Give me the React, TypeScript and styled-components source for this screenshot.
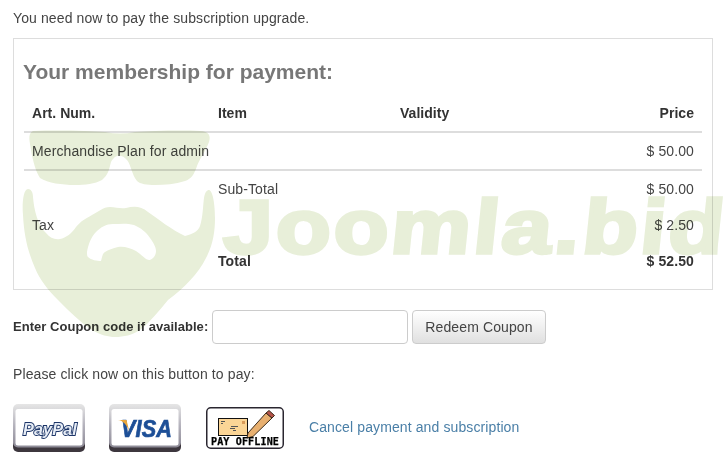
import React from "react";
import styled, { createGlobalStyle } from "styled-components";

const Global = createGlobalStyle`
  html, body { margin: 0; padding: 0; background: #fff; }
  body { font-family: "Liberation Sans", Arial, sans-serif; font-size: 14px; line-height: 20px; color: #444; letter-spacing: 0.11px; }
`;

const Page = styled.div`
  position: relative;
  width: 725px;
  height: 464px;
  padding: 8px 12px 0 13px;
  box-sizing: border-box;
  overflow: hidden;
`;

const Para = styled.p<{ $top?: number }>`
  margin: ${(p) => p.$top ?? 0}px 0 0;
`;

const Box = styled.section`
  margin-top: 10px;
  border: 1px solid #ddd;
  padding: 0 10px 10px;
`;

const Heading = styled.h3`
  margin: 18px 0 8px -1px;
  font-size: 21px;
  line-height: 30px;
  font-weight: bold;
  color: #777;
  letter-spacing: 0;
`;

const Table = styled.table`
  width: 678px;
  border-collapse: separate;
  border-spacing: 0;
  table-layout: fixed;
`;

const HeadCell = styled.th<{ $w?: number; $right?: boolean }>`
  width: ${(p) => (p.$w ? `${p.$w}px` : "auto")};
  height: 36px;
  padding: 8px;
  box-sizing: border-box;
  text-align: ${(p) => (p.$right ? "right" : "left")};
  font-weight: bold;
  color: #333;
  letter-spacing: 0.03px;
  border-bottom: 2px solid #ddd;
`;

const Cell = styled.td<{ $right?: boolean; $bold?: boolean; $line?: boolean }>`
  height: ${(p) => (p.$line ? 38 : 36)}px;
  padding: 8px;
  box-sizing: border-box;
  text-align: ${(p) => (p.$right ? "right" : "left")};
  font-weight: ${(p) => (p.$bold ? "bold" : "normal")};
  color: ${(p) => (p.$bold ? "#333" : "#444")};
  border-bottom: ${(p) => (p.$line ? "2px solid #ddd" : "none")};
  white-space: nowrap;
`;

const CouponRow = styled.form`
  display: flex;
  align-items: center;
  margin-top: 20px;
  height: 34px;
`;

const CouponLabel = styled.label`
  font-size: 13px;
  font-weight: bold;
  color: #333;
  letter-spacing: 0.03px;
  width: 199px;
  white-space: nowrap;
`;

const CouponInput = styled.input`
  width: 196px;
  height: 34px;
  box-sizing: border-box;
  border: 1px solid #ccc;
  border-radius: 4px;
  background: #fff;
`;

const RedeemButton = styled.button`
  margin-left: 4px;
  width: 134px;
  height: 34px;
  box-sizing: border-box;
  border: 1px solid #ccc;
  border-radius: 4px;
  background: linear-gradient(#fff, #e0e0e0);
  color: #444;
  font: 14px/20px "Liberation Sans", Arial, sans-serif;
  letter-spacing: 0.11px;
  padding: 0;
`;

const PayRow = styled.div`
  display: flex;
  align-items: center;
  margin-top: 20px;
  height: 48px;
`;

const PayIcon = styled.svg<{ $gap: number }>`
  display: block;
  flex: none;
  margin-right: ${(p) => p.$gap}px;
`;

const CancelLink = styled.a`
  margin-bottom: 2px;
  color: #4a7fa7;
  text-decoration: none;
`;

const Watermark = styled.div`
  position: absolute;
  left: 0;
  top: 0;
  width: 725px;
  height: 464px;
  pointer-events: none;
  mix-blend-mode: multiply;
`;

const Beard = styled.svg`
  position: absolute;
  left: 0;
  top: 0;
`;

const Brand = styled.div`
  position: absolute;
  left: 223px;
  top: 180px;
  white-space: nowrap;
  font-family: "Liberation Sans", sans-serif;
  font-weight: bold;
  font-size: 76px;
  line-height: 94px;
  letter-spacing: 2.6px;
  color: #e8efd9;
  -webkit-text-stroke: 3.5px #e8efd9;
  transform-origin: left top;
  transform: scaleX(1.18);
`;

const Slanted = styled.span`
  display: inline-block;
  transform: skewX(-5deg);
`;

function CardFrame() {
  return (
    <>
      <defs>
        <linearGradient id="cardEdge" x1="0" y1="0" x2="0" y2="1">
          <stop offset="0" stopColor="#e6e6e6" />
          <stop offset="0.5" stopColor="#b4b2bc" />
          <stop offset="1" stopColor="#8d8a96" />
        </linearGradient>
      </defs>
      <rect x="0" y="6" width="72" height="42" rx="5" fill="#3d373e" />
      <rect x="0" y="0" width="72" height="43.5" rx="5" fill="url(#cardEdge)" />
      <rect x="2.5" y="5" width="67" height="36.5" rx="2.5" fill="#fff" />
    </>
  );
}

function PayPalCard() {
  return (
    <PayIcon $gap={24} width="72" height="48" viewBox="0 0 72 48">
      <CardFrame />
      <text
        x="10"
        y="31"
        fontFamily="'Liberation Sans', sans-serif"
        fontWeight="bold"
        fontStyle="italic"
        fontSize="16"
        fill="#e6ecf5"
        stroke="#1c3568"
        strokeWidth="1.8"
        paintOrder="stroke"
        textLength="54"
        lengthAdjust="spacingAndGlyphs"
      >
        PayPal
      </text>
    </PayIcon>
  );
}

function VisaCard() {
  return (
    <PayIcon $gap={25} width="72" height="48" viewBox="0 0 72 48">
      <CardFrame />
      <text
        x="12"
        y="33"
        fontFamily="'Liberation Sans', sans-serif"
        fontWeight="bold"
        fontStyle="italic"
        fontSize="23"
        fill="#1d4f97"
        stroke="#1d4f97"
        strokeWidth="0.7"
        textLength="51"
        lengthAdjust="spacingAndGlyphs"
      >
        VISA
      </text>
      <path d="M9 16 C14 16.5 18 21 20.5 28 L17.5 16 Z" fill="#e9a53a" />
    </PayIcon>
  );
}

function OfflineCard() {
  return (
    <PayIcon $gap={25} width="78" height="42" viewBox="0 0 78 42">
      <rect x="0.75" y="0.75" width="76.5" height="40.5" rx="4" fill="#fff" stroke="#2a2630" strokeWidth="1.5" />
      <rect x="12.5" y="11.5" width="29" height="17" fill="#fbd596" stroke="#111" strokeWidth="1" />
      <path d="M15 14.5h4M15 16.5h2M25 19.5h7M24 21.5h5M27 23.5h3" stroke="#555" strokeWidth="1" fill="none" />
      <rect x="36" y="14" width="3" height="3" fill="#d99a58" />
      <path d="M42 26 L41 31 L47 29.5 L66 11 L60 6 Z" fill="#e8b070" stroke="#3a2a1a" strokeWidth="1" />
      <path d="M60 6 L63 3.5 L68.5 8.5 L66 11 Z" fill="#b5534a" stroke="#3a2a1a" strokeWidth="1" />
      <text
        x="39"
        y="38"
        textAnchor="middle"
        fontFamily="'DejaVu Sans Mono', monospace"
        fontWeight="bold"
        fontSize="10.5"
        fill="#000"
        stroke="#000"
        strokeWidth="0.25"
        textLength="68"
        lengthAdjust="spacingAndGlyphs"
      >
        PAY OFFLINE
      </text>
    </PayIcon>
  );
}

export default function App() {
  return (
    <>
      <Global />
      <Page>
        <Para>You need now to pay the subscription upgrade.</Para>
        <Box>
          <Heading>Your membership for payment:</Heading>
          <Table>
            <thead>
              <tr>
                <HeadCell $w={186}>Art. Num.</HeadCell>
                <HeadCell $w={182}>Item</HeadCell>
                <HeadCell $w={160}>Validity</HeadCell>
                <HeadCell $right>Price</HeadCell>
              </tr>
            </thead>
            <tbody>
              <tr>
                <Cell $line colSpan={3}>Merchandise Plan for admin</Cell>
                <Cell $line $right>$ 50.00</Cell>
              </tr>
              <tr>
                <Cell />
                <Cell>Sub-Total</Cell>
                <Cell />
                <Cell $right>$ 50.00</Cell>
              </tr>
              <tr>
                <Cell>Tax</Cell>
                <Cell />
                <Cell />
                <Cell $right>$ 2.50</Cell>
              </tr>
              <tr>
                <Cell />
                <Cell $bold>Total</Cell>
                <Cell />
                <Cell $right $bold>$ 52.50</Cell>
              </tr>
            </tbody>
          </Table>
        </Box>
        <CouponRow>
          <CouponLabel>Enter Coupon code if available:</CouponLabel>
          <CouponInput type="text" />
          <RedeemButton type="button">Redeem Coupon</RedeemButton>
        </CouponRow>
        <Para $top={20}>Please click now on this button to pay:</Para>
        <PayRow>
          <PayPalCard />
          <VisaCard />
          <OfflineCard />
          <CancelLink href="#">Cancel payment and subscription</CancelLink>
        </PayRow>
        <Watermark>
          <Beard width="725" height="464" viewBox="0 0 725 464">
            <path
              fill="#e8efd9"
              d="M33 131 C60 130 90 131 105 132 C115 134 125 134 135 132 C150 131 180 130 200 131 C209 131 211 136 209 142 C205 152 199 160 197 166 C194 175 191 179 185 181 C175 184 165 185 155 185 C147 185 140 184 137 181 C132 175 131 165 127 160 C124 156 120 155 117 156 C114 157 112 160 111 162 C109 170 108 175 102 180 C95 184 85 185 75 185 C62 185 48 183 40 178 C36 172 33 162 31 150 C30 142 27 134 33 131 Z"
            />
            <path
              fill="#e8efd9"
              fillRule="evenodd"
              d="M28 189 C31 189 33 192 33 197 C34 210 38 226 46 233 C50 238 55 240 60 239 C66 238 72 233 76 227 C81 221 85 219 92 215 C98 212 103 207 110 207 C116 207 120 209 126 208 C134 206 141 206 148 212 C158 219 172 230 185 236 C192 234 198 232 200 226 C203 217 203 205 204 198 C205 192 207 190 209 190 C213 191 215 205 215 218 C215 232 213 245 206 258 C198 274 184 288 168 300 C158 312 150 322 140 330 C132 335 124 337 115 337 C108 337 101 335 92 330 C80 322 70 312 58 300 C48 290 40 280 35 268 C28 252 24 236 23 215 C22 205 23 189 28 189 Z M87 252 C88 245 91 237 96 232 C101 227 106 224 113 224 C120 224 127 223 134 225 C141 228 146 232 150 238 C153 242 156 247 156 251 C156 256 152 260 149 260 C146 260 142 255 136 251 C130 248 124 246 118 247 C113 248 108 250 105 252 C102 254 102 258 101 261 C97 261 91 260 88 257 C87 256 87 254 87 252 Z"
            />
          </Beard>
          <Brand aria-hidden="true">
            Joo<Slanted>mla.bid</Slanted>
          </Brand>
        </Watermark>
      </Page>
    </>
  );
}
